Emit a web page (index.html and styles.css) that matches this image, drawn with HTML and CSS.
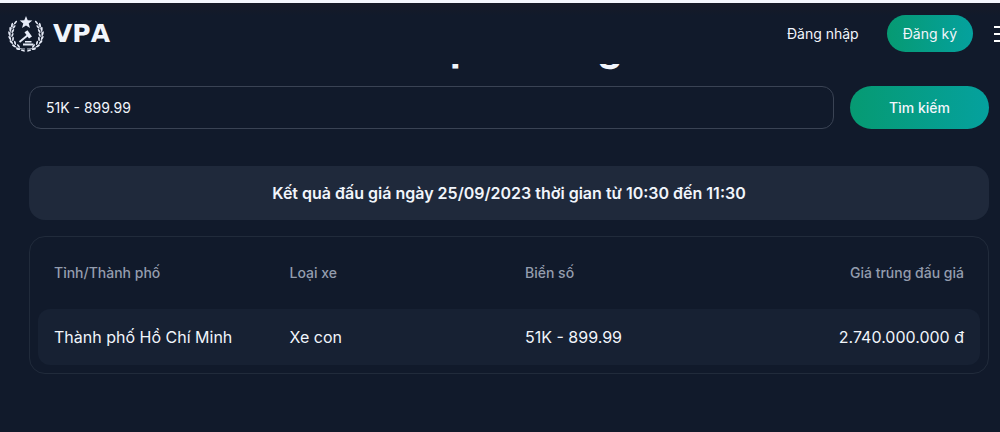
FILE: index.html
```html
<!DOCTYPE html>
<html lang="vi">
<head>
  <meta charset="UTF-8">
  <meta name="viewport" content="width=device-width, initial-scale=1.0">
  <title>VPA</title>
  <link rel="stylesheet" href="styles.css">
</head>
<body>
  <header class="header">
    <a href="#" class="logo">
      <svg class="logo-icon" viewBox="0 0 36 36" fill="#e6ebf7">
        <path d="M18 0l1.700 4.300 4.600.2-3.600 2.900 1.300 4.600-4-2.600-4 2.600 1.300-4.600-3.600-2.900 4.600-.2z"/>
        <g id="branch">
          <path d="M8 6C1 12-1 25 8 31c2 1.500 5 2 9 2" fill="none" stroke="#e6ebf7" stroke-width=".8"/>
          <ellipse cx="7.500" cy="6.500" rx=".9" ry="2.200" transform="rotate(40 7.500 6.500)"/>
          <ellipse cx="4" cy="9" rx=".9" ry="2.200" transform="rotate(15 4 9)"/>
          <ellipse cx="6" cy="11" rx=".9" ry="2.200" transform="rotate(40 6 11)"/>
          <ellipse cx="2.200" cy="13" rx=".9" ry="2.200" transform="rotate(0 2.200 13)"/>
          <ellipse cx="4.800" cy="15" rx=".9" ry="2.200" transform="rotate(30 4.800 15)"/>
          <ellipse cx="1.300" cy="17.500" rx=".9" ry="2.200" transform="rotate(-15 1.300 17.500)"/>
          <ellipse cx="4.400" cy="19" rx=".9" ry="2.200" transform="rotate(20 4.400 19)"/>
          <ellipse cx="1.800" cy="22" rx=".9" ry="2.200" transform="rotate(-30 1.800 22)"/>
          <ellipse cx="5" cy="23" rx=".9" ry="2.200" transform="rotate(5 5 23)"/>
          <ellipse cx="3.200" cy="26" rx=".9" ry="2.200" transform="rotate(-45 3.200 26)"/>
          <ellipse cx="7" cy="26.800" rx=".9" ry="2.200" transform="rotate(-15 7 26.800)"/>
          <ellipse cx="6" cy="30" rx=".9" ry="2.200" transform="rotate(-60 6 30)"/>
          <ellipse cx="10.500" cy="30" rx=".9" ry="2.200" transform="rotate(-40 10.500 30)"/>
          <ellipse cx="10" cy="33" rx=".9" ry="2.200" transform="rotate(-80 10 33)"/>
          <ellipse cx="15" cy="34.500" rx=".9" ry="2.200" transform="rotate(-75 15 34.500)"/>
        </g>
        <use href="#branch" transform="matrix(-1 0 0 1 36 0)"/>
        <path d="M16.500 16.200l3-2 4.500 6.300-3 2z"/>
        <path d="M20 19l-8.500 7" stroke="#e6ebf7" stroke-width="1.900"/>
        <path d="M17 25h6.500v1.600H17zM15 27.400h10.500v2H15z"/>
      </svg>
      <span class="logo-text">VPA</span>
    </a>
    <nav class="nav">
      <a href="#" class="login">Đăng nhập</a>
      <a href="#" class="register">Đăng ký</a>
      <button type="button" class="menu" aria-label="Menu">
        <svg viewBox="0 0 24 24" stroke="#fff" stroke-width="2"><path d="M0 5h24M0 12h24M0 19h24"/></svg>
      </button>
    </nav>
  </header>

  <main class="main">
    <h1 class="title">Kết quả đấu giá</h1>

    <form class="search">
      <input type="text" class="search-input" value="51K - 899.99" aria-label="Biển số">
      <button type="submit" class="search-button">Tìm kiếm</button>
    </form>

    <h2 class="session">Kết quả đấu giá ngày 25/09/2023 thời gian từ 10:30 đến 11:30</h2>

    <div class="results">
      <table class="table">
        <thead>
          <tr>
            <th>Tỉnh/Thành phố</th>
            <th>Loại xe</th>
            <th>Biển số</th>
            <th class="price">Giá trúng đấu giá</th>
          </tr>
        </thead>
        <tbody>
          <tr>
            <td>Thành phố Hồ Chí Minh</td>
            <td>Xe con</td>
            <td>51K - 899.99</td>
            <td class="price">2.740.000.000 đ</td>
          </tr>
        </tbody>
      </table>
    </div>
  </main>
</body>
</html>
```
FILE: styles.css
```css
* {
  box-sizing: border-box;
}
body {
  margin: 0;
  font-family: Inter, "Liberation Sans", sans-serif;
  font-size: 16px;
  color: #f1f5fb;
  background: #111a2b;
}
a {
  color: inherit;
  text-decoration: none;
}
button {
  border: none;
  font-family: inherit;
  color: inherit;
  cursor: pointer;
}

/* header stays over the page while it scrolls */
.header {
  position: fixed;
  top: 0;
  left: 0;
  right: 0;
  z-index: 10;
  display: flex;
  align-items: center;
  justify-content: space-between;
  height: 64px;
  padding-left: 8px;
  overflow: hidden;
  border-top: 3px solid #f5f6fc;
  background: linear-gradient(#171a26, #111a2b 12px);
}
.logo {
  display: flex;
  align-items: center;
  gap: 9px;
}
.logo-icon {
  width: 36px;
  height: 36px;
}
.logo-text {
  font-family: "DejaVu Sans", sans-serif;
  font-size: 25px;
  font-weight: bold;
  font-kerning: none;
}
.nav {
  display: flex;
  align-items: center;
  margin-right: -18px;
  font-size: 14px;
}
.login {
  margin-right: 28px;
}
.register {
  padding: 0 16px;
  border-radius: 19px;
  line-height: 37px;
  background: linear-gradient(90deg, #069a72, #05a19e);
}
.menu {
  width: 24px;
  height: 24px;
  margin-left: 21px;
  padding: 0;
  background: none;
}
.menu svg {
  display: block;
}

.main {
  padding: 23px 11px 56px 29px;
}
.title {
  margin: 0 0 15px;
  font-size: 39px;
  line-height: 48px;
  text-align: center;
}
.search {
  display: flex;
  gap: 16px;
}
.search-input {
  flex: 1;
  height: 43px;
  padding: 0 16px;
  border: 1px solid #3a4354;
  border-radius: 12px;
  font-family: inherit;
  font-size: 14px;
  color: inherit;
  background: transparent;
}
.search-button {
  width: 139px;
  height: 43px;
  border-radius: 22px;
  font-size: 14px;
  font-weight: 500;
  background: linear-gradient(90deg, #069a72, #05a19e);
}
.session {
  margin: 37px 0 16px;
  padding: 16px;
  border-radius: 16px;
  font-size: 16px;
  font-weight: 600;
  line-height: 22px;
  text-align: center;
  background: #1f293b;
}

.results {
  padding: 8px;
  border: 1px solid #212b3b;
  border-radius: 16px;
}
.table {
  width: 100%;
  table-layout: fixed;
  border-collapse: separate;
  border-spacing: 0;
}
.table th {
  height: 64px;
  padding: 0 16px 10px;
  font-size: 14px;
  font-weight: 500;
  text-align: left;
  color: #949dae;
}
.table td {
  height: 56px;
  padding: 0 16px;
  background: #172133;
}
.table td:first-child {
  border-radius: 12px 0 0 12px;
}
.table td:last-child {
  border-radius: 0 12px 12px 0;
}
.table .price {
  text-align: right;
}
```
